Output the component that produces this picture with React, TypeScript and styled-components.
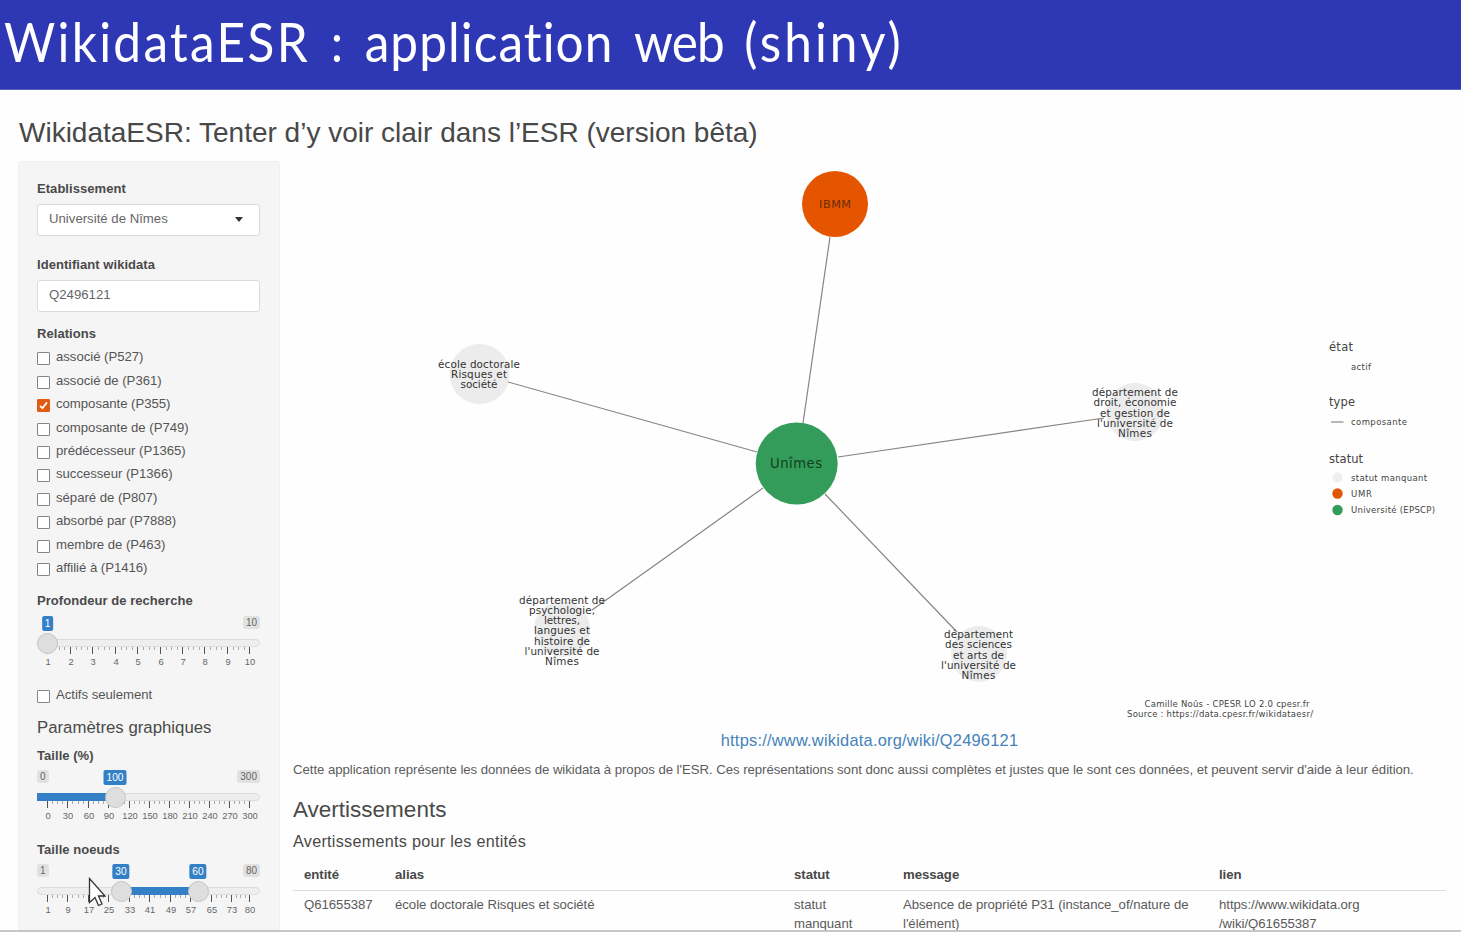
import React from 'react';
import styled, { createGlobalStyle } from 'styled-components';

const Global = createGlobalStyle`
  * { box-sizing: border-box; }
  body { margin: 0; background: #fefefe; color: #4a4a4a; overflow: hidden;
    font-family: "Liberation Sans", Arial, sans-serif; font-size: 13.2px; }
`;

const Page = styled.div`
  width: 1461px; height: 932px; display: flex; flex-direction: column; overflow: hidden;
  border-bottom: 2px solid #c5c5cb;
`;
const Banner = styled.header`
  flex: none; height: 90px; background: #2f38b4; color: #fff; padding-left: 4px;
  border-bottom: 1px solid #5a60c0;
  font-family: Lato, sans-serif; font-weight: 400; font-size: 55px; line-height: 82px;
  white-space: pre;
`;
const BannerText = styled.div`
  width: max-content; transform: scaleX(0.9); transform-origin: 0 0;
  letter-spacing: 1.2px; word-spacing: 7.6px;
`;
const Word = styled.span<{ $ls: number }>`
  letter-spacing: ${p => p.$ls}px;
`;
const AppTitle = styled.h2`
  flex: none; margin: 0; height: 71px; padding: 2px 0 0 19px; line-height: 82px;
  font-size: 28px; font-weight: 400; white-space: nowrap; color: #484848;
`;
const Columns = styled.div`
  flex: 1; min-height: 0; display: flex;
`;
const Sidebar = styled.aside`
  flex: none; width: 262px; margin-left: 18px; padding: 17px 19px 0 18px; overflow: hidden;
  background: #f5f5f5; border: 1px solid #f0f0f0; border-bottom: 0; border-radius: 4px 4px 0 0;
  display: flex; flex-direction: column;
`;
const Label = styled.div<{ $gap?: number }>`
  flex: none; height: 19px; line-height: 19px; margin-top: ${p => p.$gap ?? 0}px;
  font-size: 13px; font-weight: 700; white-space: nowrap; letter-spacing: 0.05px;
`;
const Field = styled.div`
  flex: none; height: 32px; margin-top: 6px; padding: 0 16px 4px 11px; background: #fff;
  border: 1px solid #dcdcdc; border-radius: 3px; display: flex; align-items: center;
  justify-content: space-between; color: #666; white-space: nowrap;
`;
const Caret = styled.span`
  border: 4.5px solid transparent; border-top: 5px solid #333; border-bottom: 0;
  margin-top: 2px;
`;
const Checks = styled.div<{ $gap?: number }>`
  flex: none; display: flex; flex-direction: column; margin-top: ${p => p.$gap ?? 2}px;
`;
const CheckRow = styled.div`
  height: 23.45px; display: flex; align-items: center; gap: 6px; color: #555; white-space: nowrap;
  letter-spacing: -0.04px;
`;
const Box = styled.span<{ $on?: boolean }>`
  flex: none; width: 13px; height: 13px; margin-top: 4px; border-radius: 1px; display: flex;
  border: 1px solid ${p => (p.$on ? '#e25a12' : '#858585')};
  background: ${p => (p.$on ? '#e25a12' : '#fff')};
`;
const Sub = styled.h4`
  flex: none; margin: 12px 0 0; height: 20px; line-height: 20px; font-size: 16.8px; font-weight: 400;
  white-space: nowrap;
`;
const SliderRoot = styled.div<{ $gap: number }>`
  flex: none; position: relative; height: 53px; margin-top: ${p => p.$gap}px; font-size: 9.4px;
`;
const Bounds = styled.div`
  display: flex; justify-content: space-between; height: 14px;
`;
const Bound = styled.span<{ $hide?: boolean }>`
  height: 13px; line-height: 13px; padding: 0 3px; background: #e1e1e1; color: #666;
  font-size: 10px; border-radius: 3px; visibility: ${p => (p.$hide ? 'hidden' : 'visible')};
`;
const Track = styled.div`
  margin-top: 9px; height: 8px; position: relative; border: 1px solid #dcdcdc; border-radius: 4px;
  background: #eee;
`;
const Fill = styled.div`
  position: absolute; top: -1px; height: 8px; background: #3480c6;
`;
const Handle = styled.div`
  position: absolute; top: 17px; width: 21px; height: 21px; margin-left: -10.5px;
  border-radius: 50%; background: #dedede; border: 1px solid #c4c4c4;
`;
const Value = styled.div`
  position: absolute; top: 0; height: 15px; line-height: 15px; padding: 0 3px; color: #fff;
  background: #3480c6; border-radius: 2px; font-size: 10.2px; transform: translateX(-50%);
`;
const Tick = styled.i<{ $major?: boolean }>`
  position: absolute; top: 31px; width: 1px; height: ${p => (p.$major ? 7 : 3)}px;
  background: ${p => (p.$major ? '#555' : '#aaa')};
`;
const TickText = styled.span`
  position: absolute; top: 40px; line-height: 12px; transform: translateX(-50%); color: #666;
`;

type SliderProps = {
  gap: number; min: string; max: string; hideMin?: boolean;
  labels: number[]; at: number[]; fill?: [number, number]; handles: [string, number][];
};
function Slider({ gap, min, max, hideMin, labels, at, fill, handles }: SliderProps) {
  return (
    <SliderRoot $gap={gap}>
      <Bounds><Bound $hide={hideMin}>{min}</Bound><Bound>{max}</Bound></Bounds>
      <Track>{fill && <Fill style={{ left: fill[0], width: fill[1] - fill[0] }} />}</Track>
      {at.map((x, i) => (
        <React.Fragment key={i}>
          <Tick $major style={{ left: x }} />
          {i < at.length - 1 && [0.25, 0.5, 0.75].map(f => (
            <Tick key={f} style={{ left: Math.round(x + (at[i + 1] - x) * f) }} />
          ))}
          <TickText style={{ left: x + 1 }}>{labels[i]}</TickText>
        </React.Fragment>
      ))}
      {handles.map(([v, x]) => (
        <React.Fragment key={v}>
          <Handle style={{ left: x }} />
          <Value style={{ left: x }}>{v}</Value>
        </React.Fragment>
      ))}
    </SliderRoot>
  );
}

const Main = styled.main`
  flex: 1; min-width: 0; display: flex; flex-direction: column; padding: 0 15px 0 13px;
`;
const Graph = styled.svg`
  flex: none; display: block; width: 1153px; height: 567px; font-family: "DejaVu Sans", sans-serif;
`;
const WikiLink = styled.a`
  flex: none; align-self: center; height: 26px; line-height: 25px; font-size: 16.4px; color: #4583b9;
  white-space: nowrap; letter-spacing: 0.23px;
`;
const Note = styled.p`
  flex: none; margin: 5px 0 0; height: 20px; line-height: 21px; white-space: nowrap; color: #5c5c5c;
  letter-spacing: -0.042px;
`;
const Heading = styled.h3`
  flex: none; margin: 17px 0 0; height: 26px; line-height: 27px; font-size: 22.5px; font-weight: 400;
`;
const SubHeading = styled.h4`
  flex: none; margin: 9px 0 0; height: 20px; line-height: 20px; font-size: 16.2px; font-weight: 400;
  letter-spacing: 0.27px;
`;
const Row = styled.div<{ $head?: boolean }>`
  flex: none; display: grid; grid-template-columns: 91px 399px 109px 316px 1fr;
  padding: ${p => (p.$head ? '14px 0 6px 11px' : '4px 0 0 11px')};
  border-bottom: ${p => (p.$head ? '1px solid #ddd' : '0')};
  font-weight: ${p => (p.$head ? 700 : 400)}; line-height: 19px; white-space: pre;
  letter-spacing: -0.04px; color: ${p => (p.$head ? '#484848' : '#5a5a5a')};
`;
const Pointer = styled.svg`
  position: absolute; left: 88px; top: 877px; width: 18px; height: 30px;
`;

const relations: [string, boolean?][] = [
  ['associé (P527)'], ['associé de (P361)'], ['composante (P355)', true], ['composante de (P749)'],
  ['prédécesseur (P1365)'], ['successeur (P1366)'], ['séparé de (P807)'], ['absorbé par (P7888)'],
  ['membre de (P463)'], ['affilié à (P1416)'],
];

type Line = [string, number];
type Node = { x: number; y: number; cx: number; cy: number; r: number; lines: Line[] };
const nodes: Node[] = [
  { x: 479, y: 367.7, cx: 479.5, cy: 374, r: 30, lines: [['école doctorale', 82], ['Risques et', 56], ['société', 37]] },
  { x: 1135, y: 396, cx: 1135, cy: 412, r: 29, lines: [['département de', 86], ['droit, économie', 83], ['et gestion de', 70], ["l'université de", 76], ['Nîmes', 34]] },
  { x: 562, y: 603.5, cx: 562, cy: 629, r: 28, lines: [['département de', 86], ['psychologie,', 66], ['lettres,', 36], ['langues et', 56], ['histoire de', 56], ["l'université de", 75], ['Nîmes', 34]] },
  { x: 978.5, y: 638, cx: 979, cy: 654, r: 28, lines: [['département', 69], ['des sciences', 67], ['et arts de', 51], ["l'université de", 75], ['Nîmes', 34]] },
];
const edges = [
  [830, 237, 803, 423], [508, 382, 757, 452], [838, 457, 1104, 418], [763, 488, 592, 610], [825, 494, 957, 632],
];

type TProps = { x: number; y: number; w: number; s: number; a?: 'start' | 'middle'; children: string; c?: string };
function T({ x, y, w, s, a = 'start', children, c = '#444' }: TProps) {
  return <text x={a === 'middle' ? x - w / 2 : x} y={y} textLength={w} fontSize={s} fill={c}>{children}</text>;
}

export default function App() {
  return (
    <>
      <Global />
      <Page>
        <Banner>
          <BannerText>
            <Word $ls={2.6}>WikidataESR</Word> : application <Word $ls={-1}>web</Word> <Word $ls={3.4}>(shiny)</Word>
          </BannerText>
        </Banner>
        <AppTitle>WikidataESR: Tenter d’y voir clair dans l’ESR (version bêta)</AppTitle>
        <Columns>
          <Sidebar>
            <Label>Etablissement</Label>
            <Field>Université de Nîmes<Caret /></Field>
            <Label $gap={19}>Identifiant wikidata</Label>
            <Field>Q2496121</Field>
            <Label $gap={12}>Relations</Label>
            <Checks>
              {relations.map(([name, on]) => (
                <CheckRow key={name}>
                  <Box $on={on}>
                    {on && <svg width="11" height="11" viewBox="0 0 11 11"><path d="M2 5.8 4.4 8.2 9 2.4" fill="none" stroke="#fff" strokeWidth="1.8" /></svg>}
                  </Box>
                  {name}
                </CheckRow>
              ))}
            </Checks>
            <Label $gap={12}>Profondeur de recherche</Label>
            <Slider gap={6} min="1" max="10" hideMin labels={[1, 2, 3, 4, 5, 6, 7, 8, 9, 10]}
              at={[10, 33, 55, 78, 100, 123, 145, 167, 190, 212]} handles={[['1', 10.5]]} />
            <Checks $gap={13}>
              <CheckRow><Box />Actifs seulement</CheckRow>
            </Checks>
            <Sub>Paramètres graphiques</Sub>
            <Label $gap={8}>Taille (%)</Label>
            <Slider gap={5} min="0" max="300" labels={[0, 30, 60, 90, 120, 150, 180, 210, 240, 270, 300]}
              at={[10, 30, 51, 71, 92, 112, 132, 152, 172, 192, 212]} fill={[-1, 78]} handles={[['100', 78]]} />
            <Label $gap={17}>Taille noeuds</Label>
            <Slider gap={5} min="1" max="80" labels={[1, 9, 17, 25, 33, 41, 49, 57, 65, 73, 80]}
              at={[10, 30, 51, 71, 92, 112, 133, 153, 174, 194, 212]} fill={[84, 161]} handles={[['30', 84], ['60', 161]]} />
          </Sidebar>
          <Main>
            <Graph viewBox="293 161 1153 567">
              {nodes.map(n => <circle key={n.x} cx={n.cx} cy={n.cy} r={n.r} fill="#ececec" />)}
              {edges.map(e => <line key={e[0]} x1={e[0]} y1={e[1]} x2={e[2]} y2={e[3]} stroke="#858585" strokeWidth="1.2" />)}
              <circle cx="835" cy="204" r="33" fill="#e55500" />
              <circle cx="796.7" cy="463.5" r="41" fill="#349c5a" />
              <T x={835} y={208} w={32} s={11.2} a="middle" c="#6b2d08">IBMM</T>
              <T x={796} y={468} w={52} s={13.2} a="middle" c="#12401f">Unîmes</T>
              {nodes.map(n => n.lines.map(([t, w], i) => (
                <T key={n.x + t} x={n.x} y={n.y + i * 10.25} w={w} s={10.4} a="middle" c="#333">{t}</T>
              )))}
              <T x={1329} y={351} w={24} s={11.5}>état</T>
              <T x={1351} y={370} w={20} s={8.5}>actif</T>
              <T x={1329} y={406} w={26} s={11.5}>type</T>
              <line x1="1331" x2="1343.5" y1="422" y2="422" stroke="#888" strokeWidth="1.2" />
              <T x={1351} y={425} w={56} s={8.5}>composante</T>
              <T x={1329} y={462.5} w={34} s={11.5}>statut</T>
              <circle cx="1337.5" cy="477.5" r="5" fill="#efefef" />
              <T x={1351} y={480.5} w={76} s={8.5}>statut manquant</T>
              <circle cx="1337.5" cy="493.5" r="5.2" fill="#e05605" />
              <T x={1351} y={496.5} w={21} s={8.5}>UMR</T>
              <circle cx="1337.5" cy="510" r="5.2" fill="#349c5a" />
              <T x={1351} y={513} w={84} s={8.5}>Université (EPSCP)</T>
              <T x={1144.5} y={707} w={165} s={8.5}>Camille Noûs - CPESR LO 2.0 cpesr.fr</T>
              <T x={1127} y={716.5} w={186} s={8.5}>Source : https://data.cpesr.fr/wikidataesr/</T>
            </Graph>
            <WikiLink>https://www.wikidata.org/wiki/Q2496121</WikiLink>
            <Note>Cette application représente les données de wikidata à propos de l'ESR. Ces représentations sont donc aussi complètes et justes que le sont ces données, et peuvent servir d'aide à leur édition.</Note>
            <Heading>Avertissements</Heading>
            <SubHeading>Avertissements pour les entités</SubHeading>
            <Row $head><span>entité</span><span>alias</span><span>statut</span><span>message</span><span>lien</span></Row>
            <Row>
              <span>Q61655387</span><span>école doctorale Risques et société</span><span>{'statut\nmanquant'}</span>
              <span>{"Absence de propriété P31 (instance_of/nature de\nl'élément)"}</span>
              <span>{'https://www.wikidata.org\n/wiki/Q61655387'}</span>
            </Row>
          </Main>
        </Columns>
        <Pointer viewBox="0 0 18 30">
          <path d="M1.5 1.5V25.5L7 20.5L10.5 28.5L14 27L10.5 19H17Z" fill="#fff" stroke="#333" strokeWidth="1.3" />
        </Pointer>
      </Page>
    </>
  );
}
